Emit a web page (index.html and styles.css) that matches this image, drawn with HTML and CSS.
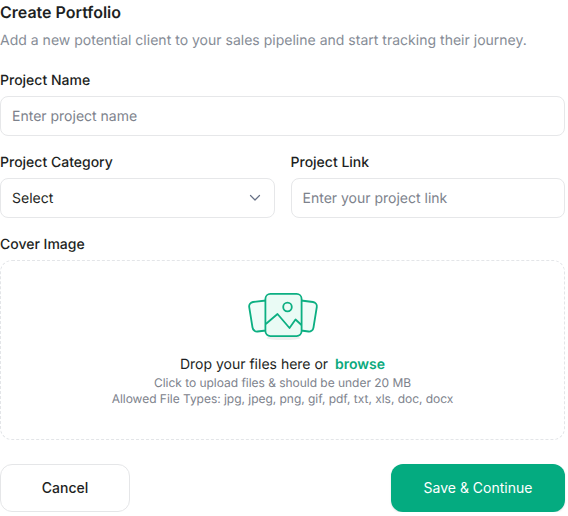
FILE: index.html
```html
<!DOCTYPE html>
<html lang="en">
<head>
<meta charset="utf-8">
<title>Create Portfolio</title>
<link rel="stylesheet" href="styles.css">
</head>
<body>
<form class="form">
  <h1 class="title">Create Portfolio</h1>
  <p class="subtitle">Add a new potential client to your sales pipeline and start tracking their journey.</p>
  <div class="field field-name">
    <label class="label">Project Name</label>
    <div class="input placeholder">Enter project name</div>
  </div>
  <div class="row">
    <div class="field">
      <label class="label">Project Category</label>
      <div class="input select"><span>Select</span>
        <svg class="chevron" width="12" height="8" viewBox="0 0 12 8" fill="none"><path d="M1.500 1.500 6 6 10.500 1.500" stroke="#667085" stroke-width="1.200" stroke-linecap="round" stroke-linejoin="round"/></svg>
      </div>
    </div>
    <div class="field">
      <label class="label">Project Link</label>
      <div class="input placeholder">Enter your project link</div>
    </div>
  </div>
  <div class="field">
    <label class="label">Cover Image</label>
    <div class="drop">
      <svg class="art" width="72" height="48" viewBox="0 0 72 48" fill="none">
        <path d="M19 7.500 6 9C3.500 9.400 1.800 11.500 2.200 14L5.500 34.500C5.900 37 8 38.800 10.500 38.500L19 37.500Z" fill="#EFFCF8" stroke="#0CAF82" stroke-width="1.800" stroke-linejoin="round"/>
        <path d="M54 7.500 66 9C68.500 9.400 70.200 11.500 69.800 14L66.500 34.500C66.100 37 64 38.800 61.500 38.500L54 37.500Z" fill="#EFFCF8" stroke="#0CAF82" stroke-width="1.800" stroke-linejoin="round"/>
        <ellipse cx="36.500" cy="45" rx="17" ry="2" fill="#EDEFEE"/>
        <rect x="18.400" y="0.900" width="36.200" height="42.200" rx="5" fill="#EAFBF5" stroke="#0CAF82" stroke-width="1.800"/>
        <circle cx="40.500" cy="14" r="4.300" stroke="#0CAF82" stroke-width="1.800"/>
        <path d="M18.800 31 30.500 21 42.500 35 48.500 26.500 54.500 32" stroke="#0CAF82" stroke-width="1.800" stroke-linejoin="round"/>
      </svg>
      <p class="drop-main">Drop your files here or <a class="browse">browse</a></p>
      <p class="drop-note">Click to upload files &amp; should be under 20 MB</p>
      <p class="drop-note">Allowed File Types: jpg, jpeg, png, gif, pdf, txt, xls, doc, docx</p>
    </div>
  </div>
  <div class="actions">
    <button type="button" class="btn cancel">Cancel</button>
    <button type="button" class="btn save">Save &amp; Continue</button>
  </div>
</form>
</body>
</html>
```
FILE: styles.css
```css
* { box-sizing: border-box; }
html, body { margin: 0; padding: 0; background: #fff; }
body { font-family: Inter, "Liberation Sans", sans-serif; color: #1d1f23; text-rendering: geometricPrecision; }
.form { width: 565px; display: flex; flex-direction: column; }
.title { margin: 2px 0 0; font-size: 16px; line-height: 20px; font-weight: 600; color: #1d1f23; }
.subtitle { margin: 9px 0 0; font-size: 14px; line-height: 20px; letter-spacing: 0.012px; color: #868c96; }
.field { display: flex; flex-direction: column; min-width: 0; }
.field-name { margin-top: 19px; }
.row { display: grid; grid-template-columns: 1fr 1fr; column-gap: 16px; margin-top: 16px; }
.label { font-size: 14px; line-height: 22px; font-weight: 500; color: #1d1f23; margin-bottom: 4px; }
.input { height: 40px; border: 1px solid #e6e7e9; border-radius: 8px; padding: 0 11px; display: flex; align-items: center; font-size: 14px; }
.placeholder { color: #7d828c; }
.select { justify-content: space-between; color: #1d1f23; padding-right: 13px; }
.row + .field { margin-top: 16px; }
.drop { height: 180px; border: 1px dashed #e3e5e8; border-radius: 12px; display: flex; flex-direction: column; align-items: center; padding-top: 32px; }
.art { display: block; }
.drop-main { margin: 14px 0 0; font-size: 14px; line-height: 20px; color: #1d1f23; }
.browse { color: #0aa97d; font-weight: 600; margin-left: 3px; }
.drop-note { margin: 0; font-size: 12px; line-height: 16px; letter-spacing: -0.03px; color: #7d828c; }
.actions { display: flex; justify-content: space-between; margin-top: 24px; }
.btn { height: 48px; padding: 0 0 2px; border-radius: 12px; font: inherit; font-size: 14px; font-weight: 500; cursor: pointer; }
.cancel { width: 130px; background: #fff; border: 1px solid #e5e6e8; color: #1d1f23; }
.save { width: 174px; background: #04ab80; border: 0; color: #fff; font-weight: 400; box-shadow: 0 1px 2px rgba(16,24,40,.12); }
```
